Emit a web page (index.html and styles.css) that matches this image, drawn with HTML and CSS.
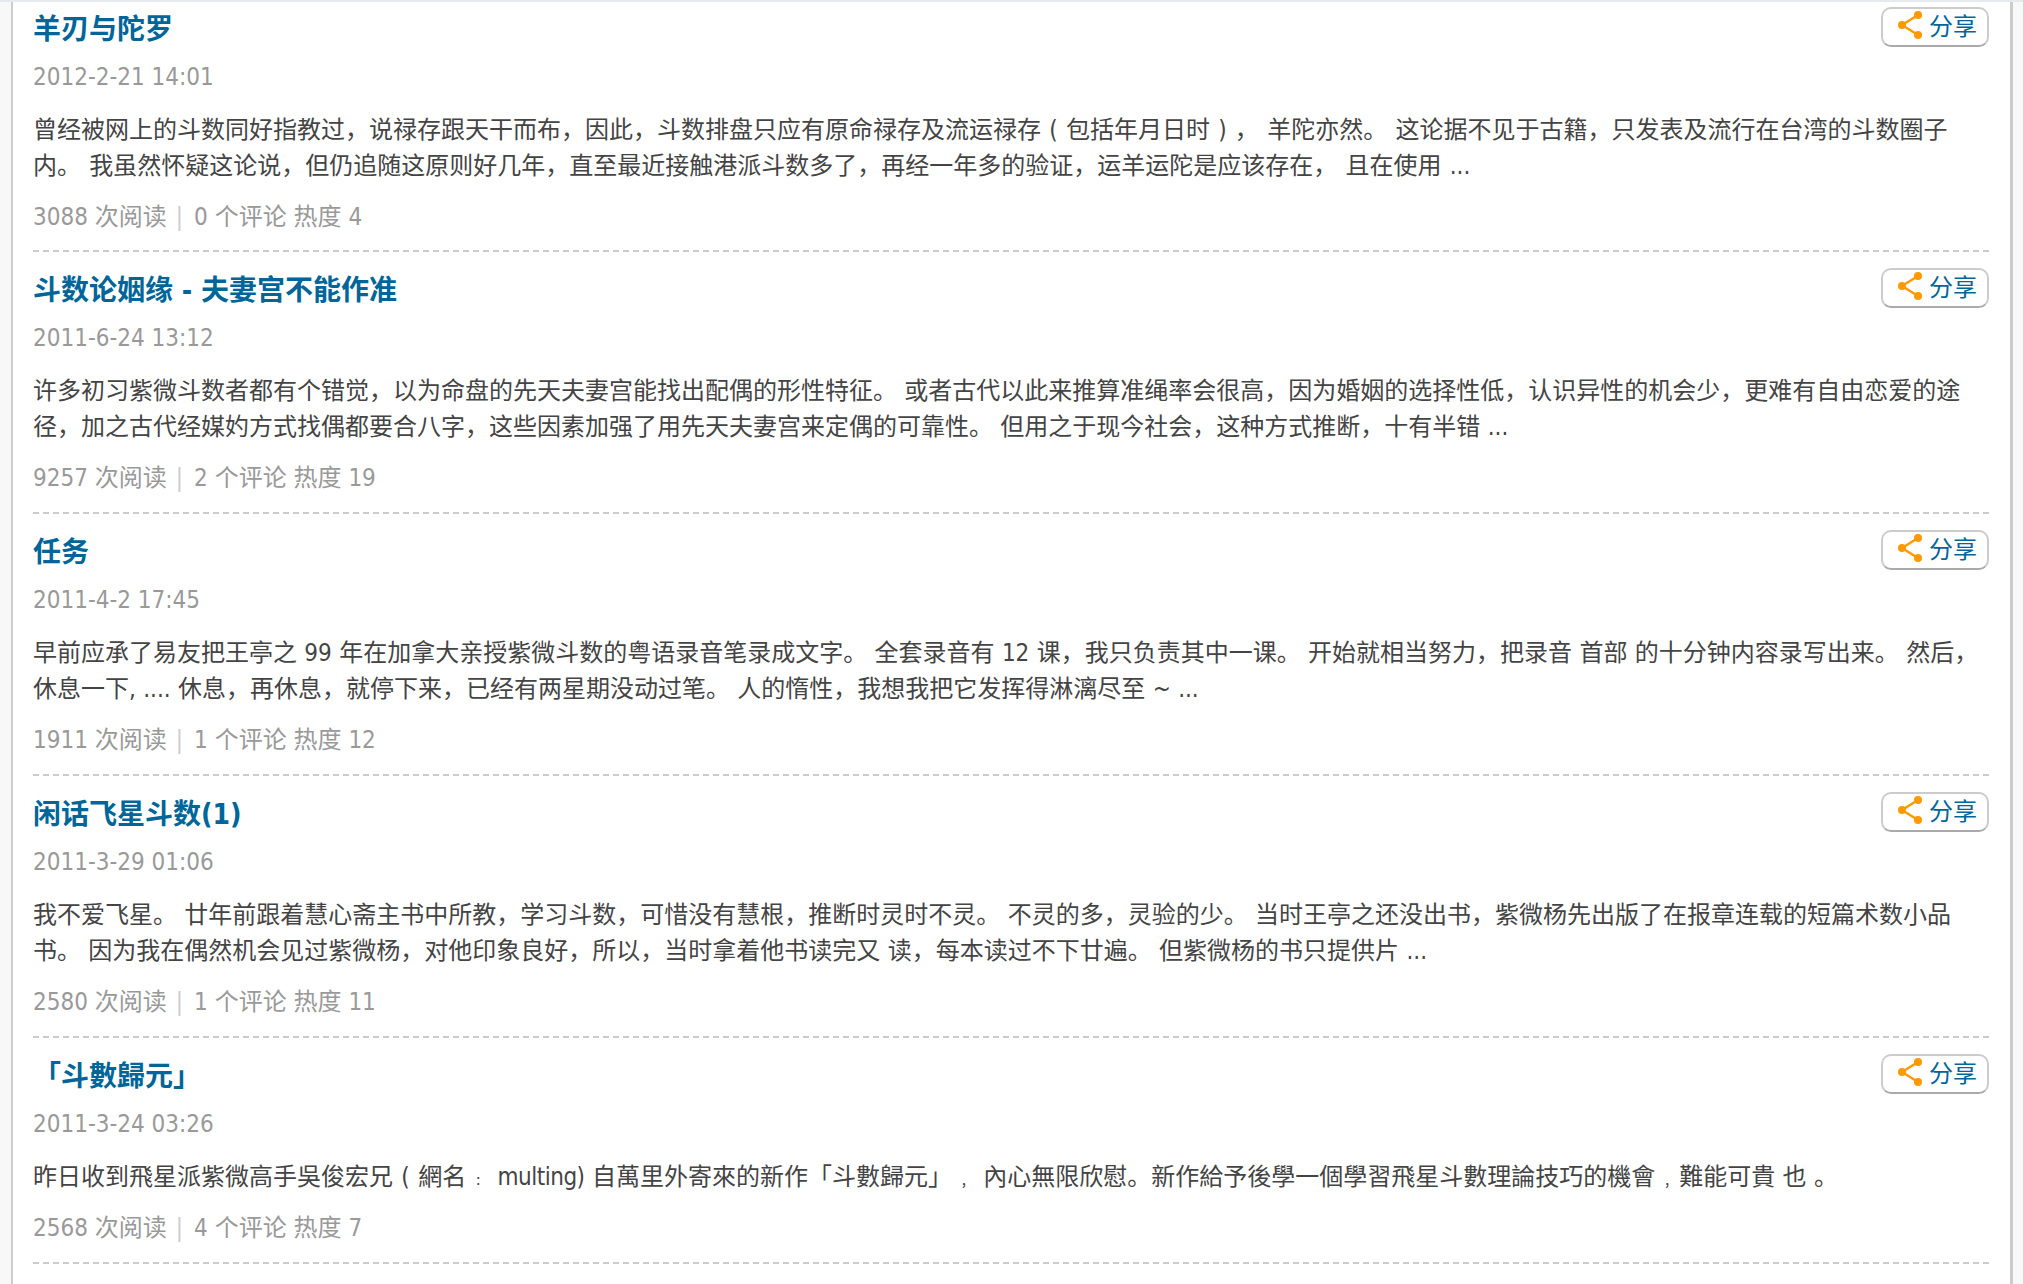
FILE: index.html
```html
<!DOCTYPE html>
<html lang="zh-CN">
<head>
<meta charset="utf-8">
<title>文章列表</title>
<link rel="stylesheet" href="styles.css">
</head>
<body>
<main class="list">
  <article class="item">
    <div class="head"><h2 class="title">羊刃与陀罗</h2><a class="share"><svg class="share-icon" viewBox="0 0 24 28"><path d="M20 4 4 14l16 10" /><circle cx="20" cy="4" r="4"/><circle cx="4" cy="14" r="4"/><circle cx="20" cy="24" r="4"/></svg>分享</a></div>
    <div class="date">2012-2-21 14:01</div>
    <p class="excerpt excerpt-wide">曾经被网上的斗数同好指教过，说禄存跟天干而布，因此，斗数排盘只应有原命禄存及流运禄存 ( 包括年月日时 ) ， 羊陀亦然。 这论据不见于古籍，只发表及流行在台湾的斗数圈子内。 我虽然怀疑这论说，但仍追随这原则好几年，直至最近接触港派斗数多了，再经一年多的验证，运羊运陀是应该存在， 且在使用 ...</p>
    <div class="meta">3088 次阅读<span class="sep">|</span>0 个评论 热度 4</div>
  </article>
  <article class="item">
    <div class="head"><h2 class="title">斗数论姻缘 - 夫妻宫不能作准</h2><a class="share"><svg class="share-icon" viewBox="0 0 24 28"><path d="M20 4 4 14l16 10" /><circle cx="20" cy="4" r="4"/><circle cx="4" cy="14" r="4"/><circle cx="20" cy="24" r="4"/></svg>分享</a></div>
    <div class="date">2011-6-24 13:12</div>
    <p class="excerpt">许多初习紫微斗数者都有个错觉，以为命盘的先天夫妻宫能找出配偶的形性特征。 或者古代以此来推算准绳率会很高，因为婚姻的选择性低，认识异性的机会少，更难有自由恋爱的途径，加之古代经媒妁方式找偶都要合八字，这些因素加强了用先天夫妻宫来定偶的可靠性。 但用之于现今社会，这种方式推断，十有半错 ...</p>
    <div class="meta">9257 次阅读<span class="sep">|</span>2 个评论 热度 19</div>
  </article>
  <article class="item">
    <div class="head"><h2 class="title">任务</h2><a class="share"><svg class="share-icon" viewBox="0 0 24 28"><path d="M20 4 4 14l16 10" /><circle cx="20" cy="4" r="4"/><circle cx="4" cy="14" r="4"/><circle cx="20" cy="24" r="4"/></svg>分享</a></div>
    <div class="date">2011-4-2 17:45</div>
    <p class="excerpt">早前应承了易友把王亭之 99 年在加拿大亲授紫微斗数的粤语录音笔录成文字。 全套录音有 12 课，我只负责其中一课。 开始就相当努力，把录音 首部 的十分钟内容录写出来。 然后，休息一下, .... 休息，再休息，就停下来，已经有两星期没动过笔。 人的惰性，我想我把它发挥得淋漓尽至 ~ ...</p>
    <div class="meta">1911 次阅读<span class="sep">|</span>1 个评论 热度 12</div>
  </article>
  <article class="item">
    <div class="head"><h2 class="title">闲话飞星斗数(1)</h2><a class="share"><svg class="share-icon" viewBox="0 0 24 28"><path d="M20 4 4 14l16 10" /><circle cx="20" cy="4" r="4"/><circle cx="4" cy="14" r="4"/><circle cx="20" cy="24" r="4"/></svg>分享</a></div>
    <div class="date">2011-3-29 01:06</div>
    <p class="excerpt">我不爱飞星。 廿年前跟着慧心斋主书中所教，学习斗数，可惜没有慧根，推断时灵时不灵。 不灵的多，灵验的少。 当时王亭之还没出书，紫微杨先出版了在报章连载的短篇术数小品书。 因为我在偶然机会见过紫微杨，对他印象良好，所以，当时拿着他书读完又 读，每本读过不下廿遍。 但紫微杨的书只提供片 ...</p>
    <div class="meta">2580 次阅读<span class="sep">|</span>1 个评论 热度 11</div>
  </article>
  <article class="item">
    <div class="head"><h2 class="title">「斗數歸元」</h2><a class="share"><svg class="share-icon" viewBox="0 0 24 28"><path d="M20 4 4 14l16 10" /><circle cx="20" cy="4" r="4"/><circle cx="4" cy="14" r="4"/><circle cx="20" cy="24" r="4"/></svg>分享</a></div>
    <div class="date">2011-3-24 03:26</div>
    <p class="excerpt">昨日收到飛星派紫微高手吳俊宏兄 <span class="paren">(</span> 網名<span class="mark">﹕</span> <span class="latin">multing)</span> 自萬里外寄來的新作「斗數歸元」<span class="mark">﹐</span> 內心無限欣慰。新作給予後學一個學習飛星斗數理論技巧的機會<span class="mark">﹐</span>難能可貴 也 。</p>
    <div class="meta">2568 次阅读<span class="sep">|</span>4 个评论 热度 7</div>
  </article>
</main>
</body>
</html>
```
FILE: styles.css
```css
html, body {
  margin: 0;
  height: 100%;
}
body {
  height: 1284px;
  overflow: hidden;
  box-sizing: border-box;
  border-top: 2px solid #e6eaee;
  background: #f8f8f8;
  font-family: "DejaVu Sans Condensed", "DejaVu Sans", "Noto Sans CJK SC", sans-serif;
  font-stretch: condensed;
  font-size: 24px;
  color: #444;
}
.list {
  box-sizing: border-box;
  height: 100%;
  margin: 0 10px 0 11px;
  padding: 0 21px 0 20px;
  background: #fff;
  border-left: 2px solid #ccc;
  border-right: 3px solid #ccc;
}
.item {
  padding-top: 19px;
  border-bottom: 2px dashed #ccc;
  height: 262px;
  box-sizing: border-box;
}
.item:first-child {
  padding-top: 8px;
  height: 250px;
}
.item:last-child {
  height: 226px;
}
.head {
  display: flex;
  justify-content: space-between;
  align-items: flex-start;
  height: 40px;
}
.title {
  margin: 0;
  font-size: 28px;
  line-height: 40px;
  font-weight: 700;
  color: #069;
}
.share {
  box-sizing: border-box;
  display: flex;
  align-items: center;
  gap: 7px;
  width: 108px;
  height: 40px;
  margin-top: -3px;
  padding-left: 15px;
  border: 2px solid #ccc;
  border-bottom-color: #aaa;
  border-radius: 10px;
  color: #069;
  line-height: 1;
}
.share-icon {
  width: 24px;
  height: 28px;
  flex: none;
  fill: #f90;
  stroke: #f90;
  margin-top: -4px;
}
.share-icon path {
  fill: none;
  stroke-width: 2.4;
}
.share-icon circle {
  stroke: none;
}
.date {
  margin-top: 9px;
  line-height: 36px;
  color: #999;
}
.excerpt {
  margin: 17px 0 15px;
  line-height: 36px;
  word-spacing: 0.5px;
}
.excerpt-wide {
  word-spacing: 1.4px;
}
.paren {
  margin: 0 1px;
}
.latin {
  letter-spacing: -0.5px;
}
.mark {
  display: inline-block;
  width: 24px;
  font-family: "Noto Sans CJK TC", sans-serif;
  font-size: 18px;
  line-height: 0;
  text-align: center;
}
.meta {
  line-height: 36px;
  color: #999;
}
.sep {
  margin: 0 11px 0 9px;
  color: #ccc;
}
```
